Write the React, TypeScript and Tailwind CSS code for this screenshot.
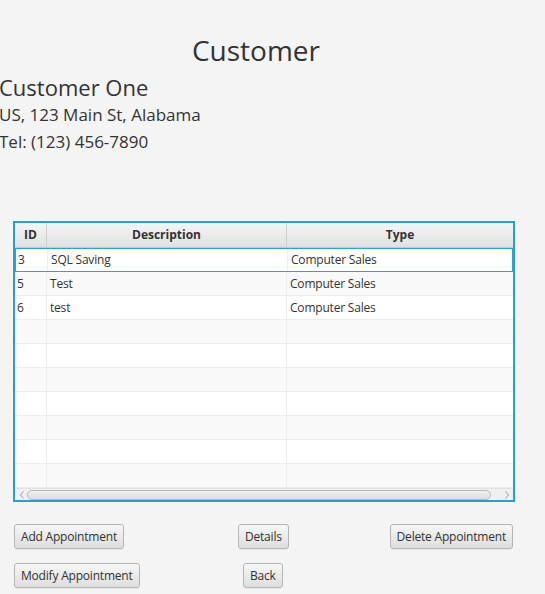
import type { ReactNode } from "react";

type Appointment = { id: number; description: string; type: string };

const appointments: Appointment[] = [
  { id: 3, description: "SQL Saving", type: "Computer Sales" },
  { id: 5, description: "Test", type: "Computer Sales" },
  { id: 6, description: "test", type: "Computer Sales" },
];

const font = { fontFamily: '"Open Sans", "Noto Sans", sans-serif' };

function FxButton({ children }: { children: ReactNode }) {
  return (
    <button className="h-[25px] px-[6px] whitespace-nowrap rounded-[3px] border border-[#b5b5b5] bg-gradient-to-b from-[#f7f7f7] to-[#dedede] text-[12px] tracking-[-0.2px] text-[#333] leading-none shadow-[0_1px_0_rgba(0,0,0,0.05)]">
      {children}
    </button>
  );
}

export default function App() {
  const rows = Array.from({ length: 10 }, (_, i) => appointments[i] ?? null);

  return (
    <div className="w-[545px] h-[594px] bg-[#f4f4f4] text-[#333] overflow-hidden" style={font}>
      <div className="w-[512px] pt-[31px] text-center text-[28px] leading-[38px]">Customer</div>
      <div className="mt-[4px] text-[22px] leading-[28px] -ml-[1px]">Customer One</div>
      <div className="text-[17px] leading-[27px] -ml-[1px]">US, 123 Main St, Alabama</div>
      <div className="text-[17px] leading-[27px] -ml-[1px]">Tel: (123) 456-7890</div>

      <div className="mt-[66px] ml-[13px] w-[502px] h-[281px] border-2 border-[#1fa3d6] bg-white flex flex-col">
        <div className="flex h-[25px] border-b border-[#c8c8c8] bg-gradient-to-b from-[#f5f5f5] to-[#e1e1e1] text-[12px] font-bold text-[#333]">
          <div className="w-[32px] border-r border-[#cfcfcf] flex items-center justify-center">ID</div>
          <div className="w-[240px] border-r border-[#cfcfcf] flex items-center justify-center">Description</div>
          <div className="flex-1 flex items-center justify-center">Type</div>
        </div>
        {rows.map((row, i) => (
          <div
            key={i}
            className={`flex h-[24px] text-[12px] tracking-[-0.2px] ${i % 2 === 0 ? "bg-white" : "bg-[#f9f9f9]"} ${
              i === 0 ? "border border-[#2ba3d6]" : "border-b border-[#ededed]"
            }`}
          >
            <div className="w-[32px] border-r border-[#ededed] flex items-center pl-[2px]">{row?.id}</div>
            <div className="w-[240px] border-r border-[#ededed] flex items-center pl-[3px]">{row?.description}</div>
            <div className="flex-1 flex items-center pl-[3px]">{row?.type}</div>
          </div>
        ))}
        <div className="flex-1 bg-[#f0f0f0] border-t border-[#e2e2e2] flex items-center pl-[2px]">
          <div className="w-[10px] flex justify-center shrink-0">
            <svg width="8" height="10" viewBox="0 0 8 10">
              <path d="M5.5 1.5 L2.5 5 L5.5 8.5" fill="none" stroke="#9a9a9a" strokeWidth="1" />
            </svg>
          </div>
          <div className="flex-1 h-[10px] rounded-[5px] border border-[#b8b8b8] bg-gradient-to-b from-[#f2f2f2] to-[#dcdcdc]" />
          <div className="w-[22px] flex justify-end pr-[2px]">
            <svg width="8" height="10" viewBox="0 0 8 10">
              <path d="M2.5 1.5 L5.5 5 L2.5 8.5" fill="none" stroke="#9a9a9a" strokeWidth="1" />
            </svg>
          </div>
        </div>
      </div>

      <div className="mt-[22px] ml-[14px] w-[499px] grid grid-cols-[224px_151px_1fr] gap-y-[14px]">
        <div className="flex">
          <FxButton>Add Appointment</FxButton>
        </div>
        <div className="flex">
          <FxButton>Details</FxButton>
        </div>
        <div className="flex justify-end">
          <FxButton>Delete Appointment</FxButton>
        </div>
        <div className="flex">
          <FxButton>Modify Appointment</FxButton>
        </div>
        <div className="flex pl-[5px]">
          <FxButton>Back</FxButton>
        </div>
        <div />
      </div>
    </div>
  );
}
